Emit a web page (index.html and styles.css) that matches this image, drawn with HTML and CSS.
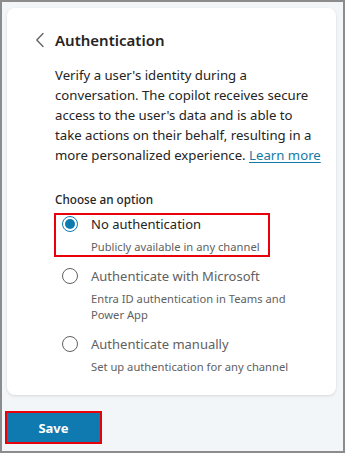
FILE: index.html
```html
<!DOCTYPE html>
<html>
<head>
    <title>Authentication</title>
    <link rel="stylesheet" href="styles.css">
</head>
<body>

<div class="frame">
    <div class="card">
        <div class="header">
            <button class="back" aria-label="Back">
                <svg width="10" height="16" viewBox="0 0 10 16"><path d="M8 1.5 L1.8 8 L8 14.5" fill="none" stroke="#616161" stroke-width="1.3" stroke-linecap="round" stroke-linejoin="round"/></svg>
            </button>
            <h1 class="title">Authentication</h1>
        </div>
        <div class="content">
            <p class="intro">Verify a user's identity during a<br>conversation. The copilot receives secure<br>access to the user's data and is able to<br>take actions on their behalf, resulting in a<br>more personalized experience. <a href="#" class="link">Learn more</a></p>

            <div class="label">Choose an option</div>
            <div class="options">
                <label class="option selected highlight">
                    <span class="radio"></span>
                    <span class="text">
                        <span class="name">No authentication</span>
                        <span class="desc">Publicly available in any channel</span>
                    </span>
                </label>
                <label class="option">
                    <span class="radio"></span>
                    <span class="text">
                        <span class="name">Authenticate with Microsoft</span>
                        <span class="desc">Entra ID authentication in Teams and<br>Power App</span>
                    </span>
                </label>
                <label class="option">
                    <span class="radio"></span>
                    <span class="text">
                        <span class="name">Authenticate manually</span>
                        <span class="desc">Set up authentication for any channel</span>
                    </span>
                </label>
            </div>
        </div>
    </div>
    <div class="footer">
        <button class="save">Save</button>
    </div>
</div>

</body>
</html>
```

FILE: styles.css
```css
html, body {
    margin: 0;
    padding: 0;
}
body {
    font-family: "Noto Sans", "Open Sans", sans-serif;
    color: #242424;
}
.frame {
    box-sizing: border-box;
    width: 345px;
    height: 453px;
    border: 2px solid #8c8c8c;
    background-color: #f3f6f9;
    padding: 6px 0 0 3px;
}
.card {
    height: 387px;
    box-sizing: border-box;
    margin: 0 7px 0 2px;
    background-color: #fff;
    border-radius: 8px;
    box-shadow: 0 1px 3px rgba(0, 0, 0, 0.12);
    padding: 20px 10px 0 27px;
}
.header {
    display: flex;
    align-items: center;
    gap: 9px;
    height: 24px;
}
.back {
    border: none;
    background: none;
    padding: 0;
    width: 12px;
    display: flex;
    align-items: center;
    justify-content: center;
    cursor: pointer;
}
.title {
    margin: 0;
    font-size: 15px;
    font-weight: 600;
}
.content {
    padding-left: 21px;
}
.intro {
    margin: 13px 0 0 0;
    font-size: 13.2px;
    line-height: 20px;
    white-space: nowrap;
}
.link {
    color: #147aa3;
    text-underline-offset: 2px;
}
.label {
    margin-top: 25px;
    font-size: 11.7px;
    font-weight: 500;
    line-height: 18px;
}
.options {
    margin: 5px 0 0 -1px;
    display: flex;
    flex-direction: column;
    align-items: flex-start;
    gap: 8px;
}
.option {
    display: flex;
    gap: 13px;
    padding: 0 8px 0 6px;
    border: 2px solid transparent;
    color: #616161;
}
.option.highlight {
    border-color: #e8000b;
}
.radio {
    box-sizing: border-box;
    flex: none;
    width: 16px;
    height: 16px;
    margin-top: 1px;
    border-radius: 50%;
    border: 1px solid #616161;
    display: flex;
    align-items: center;
    justify-content: center;
}
.selected .radio {
    border-color: #0f7ab0;
}
.selected .radio::after {
    content: "";
    width: 10px;
    height: 10px;
    border-radius: 50%;
    background-color: #0f7ab0;
}
.text {
    display: flex;
    flex-direction: column;
}
.name {
    font-size: 13px;
    line-height: 18px;
}
.selected .name {
    color: #242424;
}
.desc {
    font-size: 11.2px;
    line-height: 16px;
    margin-top: 6px;
}
.footer {
    padding-top: 16px;
}
.save {
    box-sizing: border-box;
    width: 97px;
    height: 33px;
    border: 2px solid #e8000b;
    background-color: #0f7ab0;
    color: #fff;
    font-family: "Noto Sans", "Open Sans", sans-serif;
    font-weight: 700;
    font-size: 13px;
    cursor: pointer;
}
```
